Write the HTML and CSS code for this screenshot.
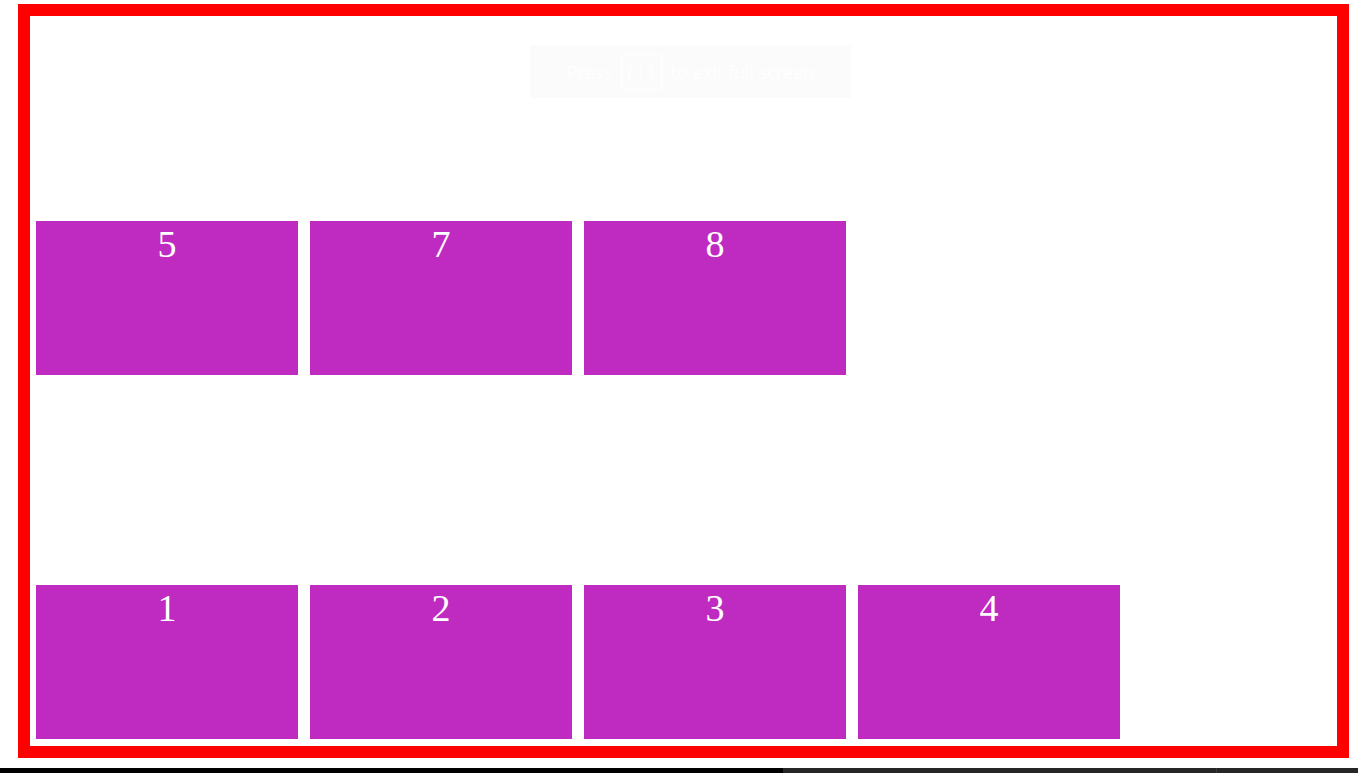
FILE: index.html
```html
<!DOCTYPE html>
<html>
<head>
<meta charset="utf-8">
<link rel="stylesheet" href="styles.css">
</head>
<body>
<div class="frame">
  <div class="grid">
    <div class="row">
      <div class="tile">5</div>
      <div class="tile">7</div>
      <div class="tile">8</div>
    </div>
    <div class="row">
      <div class="tile">1</div>
      <div class="tile">2</div>
      <div class="tile">3</div>
      <div class="tile">4</div>
    </div>
  </div>
</div>
<div class="toast"><span>Press</span><span class="key">F11</span><span>to exit full screen</span></div>
<div class="bar"><div class="bar-dark"></div><div class="bar-grey"><span class="tick"></span></div></div>
</body>
</html>
```

FILE: styles.css
```css
html, body {
  margin: 0;
  padding: 0;
  background: #ffffff;
}
body {
  width: 1358px;
  height: 773px;
  overflow: hidden;
}
.frame {
  margin: 4px 9px 10px 18px;
  height: 754px;
  box-sizing: border-box;
  border: 12px solid #ff0000;
}
.grid {
  height: 100%;
  display: flex;
  flex-direction: column;
  justify-content: space-between;
  padding: 205px 6px 7px 6px;
  box-sizing: border-box;
}
.row {
  display: flex;
  gap: 12px;
}
.tile {
  width: 262px;
  height: 154px;
  flex: none;
  background: #bf2bc1;
  color: #ffffff;
  font-family: "Liberation Serif", serif;
  font-size: 38px;
  line-height: 1;
  padding-top: 4px;
  box-sizing: border-box;
  text-align: center;
}
.toast {
  position: absolute;
  left: 530px;
  top: 45px;
  width: 321px;
  height: 53px;
  background: #fbfbfb;
  color: #ffffff;
  font-family: "Open Sans", "Noto Sans", sans-serif;
  font-size: 18px;
  display: flex;
  align-items: center;
  justify-content: center;
  gap: 9px;
  box-sizing: border-box;
}
.key {
  display: inline-flex;
  align-items: center;
  justify-content: center;
  width: 41px;
  height: 36px;
  border: 1px solid #ffffff;
  box-sizing: border-box;
  border-radius: 2px;
}
.bar {
  display: flex;
  height: 5px;
}
.bar-dark {
  width: 783px;
  background: #000000;
}
.bar-grey {
  flex: 1;
  background: #262626;
  position: relative;
}
.tick {
  position: absolute;
  left: 433px;
  top: 0;
  width: 1px;
  height: 5px;
  background: #3a3a3a;
}
```
